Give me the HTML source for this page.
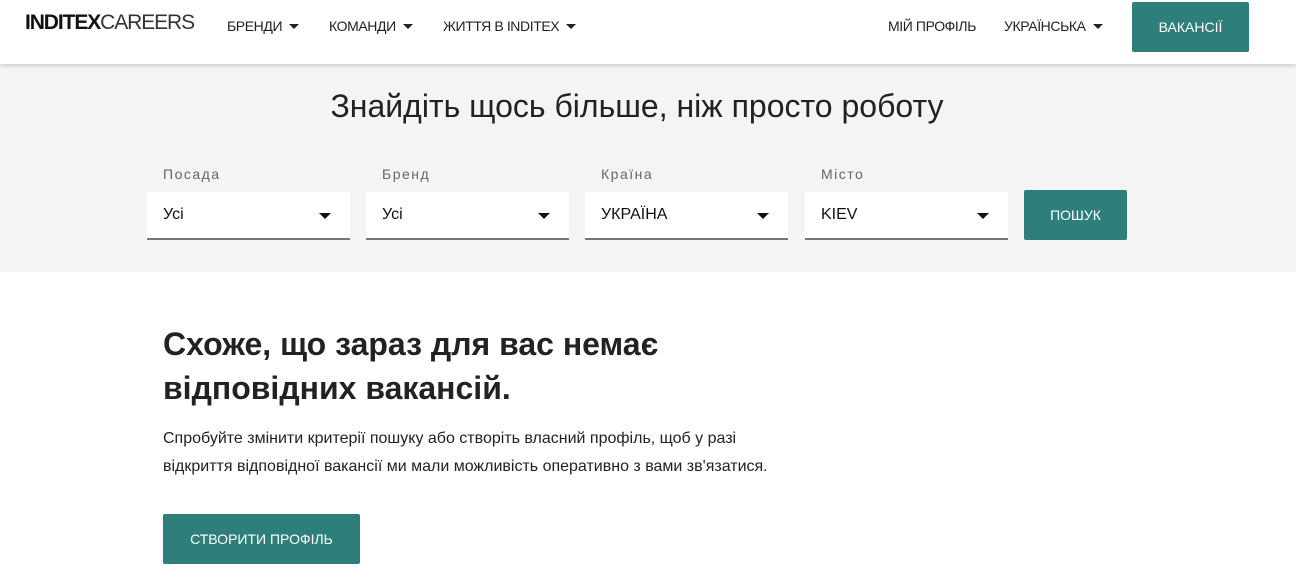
<!DOCTYPE html>
<html><head><meta charset="utf-8"><style>
*{margin:0;padding:0;box-sizing:border-box}
body{width:1296px;height:574px;overflow:hidden;background:#fff;font-family:"Liberation Sans",sans-serif;color:#222;position:relative}
.hdr{position:absolute;top:0;left:0;width:1296px;height:64px;background:#fff;box-shadow:0 2px 4px rgba(0,0,0,.15);z-index:2}
.logo{position:absolute;left:25px;top:11px;font-size:21px;letter-spacing:-1.1px;color:#111}
.logo b{font-weight:bold}
.logo span{font-weight:normal;color:#333}
.nav{position:absolute;top:18px;font-size:14px;color:#222;letter-spacing:-0.4px}
.tri{display:inline-block;width:0;height:0;border-left:5px solid transparent;border-right:5px solid transparent;border-top:5px solid #222;margin-left:7px;vertical-align:2px}
.btn{position:absolute;background:#2e7f7b;color:#fff;font-size:14px;display:flex;align-items:center;justify-content:center;border-radius:2px}
.band{position:absolute;top:64px;left:0;width:1296px;height:208px;background:#f4f4f4}
h1{position:absolute;top:88px;left:0;width:1274px;text-align:center;font-weight:normal;font-size:32px;color:#222}
.lbl{position:absolute;top:166px;font-size:14px;color:#666;letter-spacing:1.5px}
.sel{position:absolute;top:192px;width:203px;height:48px;background:#fff;border-bottom:2px solid #777;font-size:16px;padding:14px 16px;color:#111}
.sel .t{position:absolute;right:19px;top:21px;border-left:6px solid transparent;border-right:6px solid transparent;border-top:6px solid #111}
h2{position:absolute;top:322px;left:163px;font-size:32px;line-height:44px;font-weight:bold;color:#222}
p{position:absolute;top:425px;left:163px;font-size:16px;line-height:28px;color:#222}
</style></head><body>
<div class="hdr">
<div class="logo"><b>INDITEX</b><span>CAREERS</span></div>
<div class="nav" style="left:227px">БРЕНДИ<span class="tri"></span></div>
<div class="nav" style="left:329px">КОМАНДИ<span class="tri"></span></div>
<div class="nav" style="left:443px">ЖИТТЯ В INDITEX<span class="tri"></span></div>
<div class="nav" style="left:888px">МІЙ ПРОФІЛЬ</div>
<div class="nav" style="left:1004px">УКРАЇНСЬКА<span class="tri"></span></div>
<div class="btn" style="left:1132px;top:2px;width:117px;height:50px">ВАКАНСІЇ</div>
</div>
<div class="band"></div>
<h1>Знайдіть щось більше, ніж просто роботу</h1>
<div class="lbl" style="left:163px">Посада</div>
<div class="lbl" style="left:382px">Бренд</div>
<div class="lbl" style="left:601px">Країна</div>
<div class="lbl" style="left:821px">Місто</div>
<div class="sel" style="left:147px">Усі<span class="t"></span></div>
<div class="sel" style="left:366px">Усі<span class="t"></span></div>
<div class="sel" style="left:585px">УКРАЇНА<span class="t"></span></div>
<div class="sel" style="left:805px">KIEV<span class="t"></span></div>
<div class="btn" style="left:1024px;top:190px;width:103px;height:50px">ПОШУК</div>
<h2>Схоже, що зараз для вас немає<br>відповідних вакансій.</h2>
<p>Спробуйте змінити критерії пошуку або створіть власний профіль, щоб у разі<br>відкриття відповідної вакансії ми мали можливість оперативно з вами зв'язатися.</p>
<div class="btn" style="left:163px;top:514px;width:197px;height:50px">СТВОРИТИ ПРОФІЛЬ</div>
</body></html>
